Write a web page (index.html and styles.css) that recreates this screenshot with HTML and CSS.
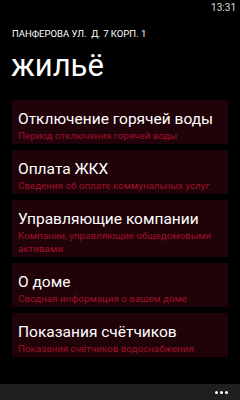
FILE: index.html
```html
<!DOCTYPE html>
<html lang="ru">
<head>
<meta charset="utf-8">
<link rel="stylesheet" href="styles.css">
</head>
<body>
<div class="phone">
  <div class="status"><span class="clock">13:31</span></div>
  <div class="header">
    <div class="app-name">ПАНФЕРОВА УЛ.&nbsp; Д. 7 КОРП. 1</div>
    <div class="page-title">жильё</div>
  </div>
  <div class="list">
    <div class="card">
      <div class="card-title">Отключение горячей воды</div>
      <div class="card-sub">Период отключения горячей воды</div>
    </div>
    <div class="card">
      <div class="card-title">Оплата ЖКХ</div>
      <div class="card-sub">Сведения об оплате коммунальных услуг</div>
    </div>
    <div class="card">
      <div class="card-title">Управляющие компании</div>
      <div class="card-sub">Компании, управляющие общедомовыми активами</div>
    </div>
    <div class="card">
      <div class="card-title">О доме</div>
      <div class="card-sub">Сводная информация о вашем доме</div>
    </div>
    <div class="card">
      <div class="card-title">Показания счётчиков</div>
      <div class="card-sub">Показания счётчиков водоснабжения</div>
    </div>
  </div>
  <div class="appbar">
    <div class="dots"><span></span><span></span><span></span></div>
  </div>
</div>
</body>
</html>
```
FILE: styles.css
```css
html, body {
  margin: 0;
  padding: 0;
  background: #000;
}
body {
  font-family: "Segoe UI", Roboto, "Open Sans", sans-serif;
  color: #fff;
}
.phone {
  width: 240px;
  height: 400px;
  display: flex;
  flex-direction: column;
  overflow: hidden;
}
.status {
  height: 14px;
  display: flex;
  justify-content: flex-end;
  align-items: center;
  padding-right: 4px;
}
.clock {
  font-size: 10px;
  color: #ddd;
}
.header {
  padding: 13px 0 0 12px;
}
.app-name {
  font-size: 9.5px;
  line-height: 14px;
}
.page-title {
  font-size: 31px;
  line-height: 36px;
  margin-top: 7px;
  margin-left: -1px;
}
.list {
  flex: 1;
  display: flex;
  flex-direction: column;
  gap: 6px;
  padding: 16px 12px 0 12px;
}
.card {
  background: #1f0309;
  padding: 9px 6px 2px 6px;
}
.card-title {
  font-size: 15.5px;
  line-height: 20px;
}
.card-sub {
  font-size: 9.8px;
  line-height: 13px;
  color: #a30f2c;
}
.appbar {
  height: 16px;
  background: #1f1f1f;
  display: flex;
  justify-content: flex-end;
  align-items: center;
  padding-right: 12px;
}
.dots {
  display: flex;
  gap: 2px;
}
.dots span {
  width: 3px;
  height: 3px;
  border-radius: 50%;
  background: #fff;
}
```
